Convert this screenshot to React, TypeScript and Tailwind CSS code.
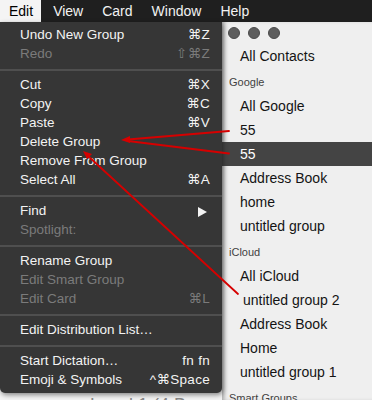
import React from 'react';

type MenuEntry =
  | { sep: true }
  | { sep?: false; label: string; shortcut?: string; disabled?: boolean; submenu?: boolean };

const menu: MenuEntry[] = [
  { label: 'Undo New Group', shortcut: '⌘Z' },
  { label: 'Redo', shortcut: '⇧⌘Z', disabled: true },
  { sep: true },
  { label: 'Cut', shortcut: '⌘X' },
  { label: 'Copy', shortcut: '⌘C' },
  { label: 'Paste', shortcut: '⌘V' },
  { label: 'Delete Group' },
  { label: 'Remove From Group' },
  { label: 'Select All', shortcut: '⌘A' },
  { sep: true },
  { label: 'Find', submenu: true },
  { label: 'Spotlight:', disabled: true },
  { sep: true },
  { label: 'Rename Group' },
  { label: 'Edit Smart Group', disabled: true },
  { label: 'Edit Card', shortcut: '⌘L', disabled: true },
  { sep: true },
  { label: 'Edit Distribution List…' },
  { sep: true },
  { label: 'Start Dictation…', shortcut: 'fn fn' },
  { label: 'Emoji & Symbols', shortcut: '^⌘Space' },
];

type SideRow = { header?: boolean; label: string; selected?: boolean; indent?: boolean };

const groups: SideRow[] = [
  { label: 'All Contacts' },
  { label: 'Google', header: true },
  { label: 'All Google' },
  { label: '55' },
  { label: '55', selected: true },
  { label: 'Address Book' },
  { label: 'home' },
  { label: 'untitled group' },
  { label: 'iCloud', header: true },
  { label: 'All iCloud' },
  { label: 'untitled group 2', indent: true },
  { label: 'Address Book' },
  { label: 'Home' },
  { label: 'untitled group 1' },
  { label: 'Smart Groups', header: true },
];

const MenuBar = () => (
  <div className="flex h-[22px] items-center bg-[#1f1f1f] text-[14px] text-[#f2f2f2]">
    <div className="flex h-full items-center bg-[#f4f4f4] pl-[9px] pr-[8px] text-black">Edit</div>
    <div className="ml-[12px] flex gap-[19px]">
      <span>View</span>
      <span>Card</span>
      <span>Window</span>
      <span>Help</span>
    </div>
  </div>
);

const EditMenu = () => (
  <div className="absolute left-0 top-[22px] w-[222px] rounded-b-[5px] bg-[#363636] pb-[3px] pt-[4px] text-[13.5px] shadow-[1px_2px_5px_rgba(0,0,0,0.45)]">
    {menu.map((m, i) =>
      m.sep ? (
        <div key={i} className="flex h-[12px] items-center">
          <div className="h-[2px] w-full bg-[#4f4f4f]" />
        </div>
      ) : (
        <div
          key={i}
          className={`flex h-[19px] items-center justify-between pl-[20px] pr-[12px] ${
            m.disabled ? 'text-[#7b7b7b]' : 'text-[#f3f3f3]'
          }`}
        >
          <span>{m.label}</span>
          {m.shortcut && <span className="tracking-[0.3px]">{m.shortcut}</span>}
          {m.submenu && (
            <svg width="9" height="10" viewBox="0 0 9 10" className="mr-[3px]">
              <path d="M0 0 L9 5 L0 10 Z" fill="#f3f3f3" />
            </svg>
          )}
        </div>
      )
    )}
  </div>
);

const Sidebar = () => (
  <div className="relative w-[150px] bg-[#efefef] shadow-[inset_4px_0_4px_-2px_rgba(0,0,0,0.3)]">
    <div className="flex h-[22px] items-center gap-[8px] pl-[6px]">
      <div className="h-[12px] w-[12px] rounded-full border border-[#4b4b4b] bg-[#5d5d5d]" />
      <div className="h-[12px] w-[12px] rounded-full border border-[#4b4b4b] bg-[#5d5d5d]" />
      <div className="h-[12px] w-[12px] rounded-full border border-[#4b4b4b] bg-[#5d5d5d]" />
    </div>
    {groups.map((g, i) =>
      g.header ? (
        <div key={i} className="flex h-[26px] items-end pb-[4px] pl-[7px] text-[11px] text-[#3f3f3f]">
          {g.label}
        </div>
      ) : (
        <div
          key={i}
          className={`flex h-[24px] items-center text-[14px] ${g.indent ? 'pl-[21px]' : 'pl-[18px]'} ${
            g.selected ? 'bg-[#444444] text-white' : 'text-[#141414]'
          }`}
        >
          {g.label}
        </div>
      )
    )}
  </div>
);

const Arrows = () => (
  <svg className="pointer-events-none absolute inset-0" width="372" height="400" viewBox="0 0 372 400">
    <g stroke="#d60000" strokeWidth="1.8" fill="none" strokeLinecap="round">
      <line x1="128" y1="139.5" x2="229" y2="131" />
      <line x1="128" y1="141" x2="229" y2="153.5" />
      <line x1="88" y1="156" x2="238" y2="294" />
    </g>
    <g fill="#d60000">
      <path d="M121 140 L130 136 L130 143 Z" />
      <path d="M83 151 L92 154 L87 159 Z" />
    </g>
  </svg>
);

export default function App() {
  return (
    <div className="relative h-[400px] w-[372px] overflow-hidden bg-[#efefef] font-['Liberation_Sans','DejaVu_Sans',sans-serif]">
      <MenuBar />
      <div className="flex h-[378px]">
        <div className="w-[222px] bg-[#f4f4f4] pt-[372px]">
          <div className="flex items-center pl-[73px]">
            <div className="h-[5px] w-[5px] rounded-full bg-[#3b55d0]" />
            <span className="ml-[17px] whitespace-nowrap text-[18px] leading-[22px] text-[#8a8a8a]">Level 1 (4 Boxes)</span>
          </div>
        </div>
        <Sidebar />
      </div>
      <EditMenu />
      <Arrows />
    </div>
  );
}
